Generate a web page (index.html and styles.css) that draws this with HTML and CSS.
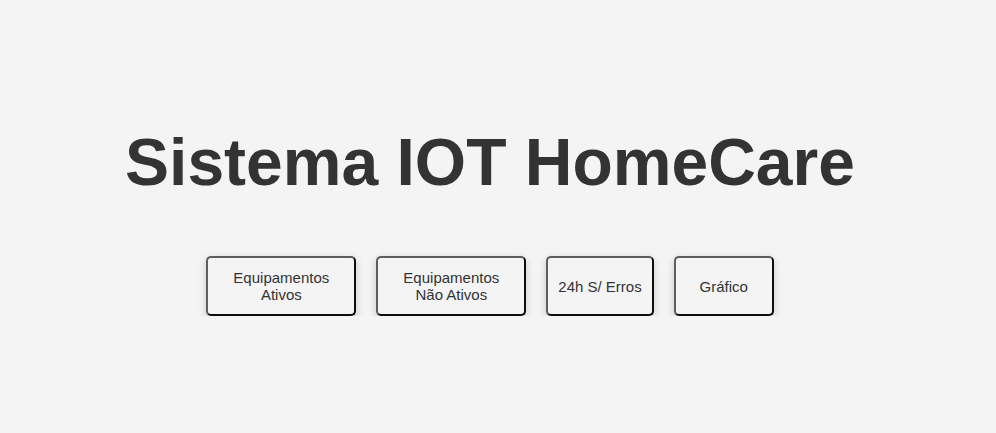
FILE: index.html
```html
<!DOCTYPE html>
<html lang="pt">
<head>
<meta charset="utf-8">
<title>Sistema IOT HomeCare</title>
<link rel="stylesheet" href="styles.css">
</head>
<body>
<main class="page">
  <h1 class="title">Sistema IOT HomeCare</h1>
  <nav class="actions">
    <button class="btn">Equipamentos Ativos</button>
    <button class="btn">Equipamentos Não Ativos</button>
    <button class="btn">24h S/ Erros</button>
    <button class="btn">Gráfico</button>
  </nav>
</main>
</body>
</html>
```

FILE: styles.css
```css
html, body {
  margin: 0;
  padding: 0;
  background: #f4f4f4;
}
body {
  font-family: "Liberation Sans", Arial, sans-serif;
  color: #333;
}
.page {
  width: 980px;
  padding-top: 123px;
  text-align: center;
}
.title {
  margin: 0;
  font-size: 66px;
  font-weight: bold;
  line-height: 78px;
  color: #333;
}
.actions {
  display: flex;
  justify-content: center;
  gap: 20px;
  margin-top: 55px;
}
.btn {
  height: 60px;
  min-width: 100px;
  max-width: 150px;
  padding: 0 10px;
  font-family: "Liberation Sans", Arial, sans-serif;
  font-size: 15px;
  line-height: 17px;
  color: #333;
  background: #f4f4f4;
  border: 2px solid;
  border-color: #5e5e5e #0d0d0d #0d0d0d #5e5e5e;
  border-radius: 5px;
  box-shadow: 0 3px 8px rgba(0, 0, 0, 0.18);
}
```
